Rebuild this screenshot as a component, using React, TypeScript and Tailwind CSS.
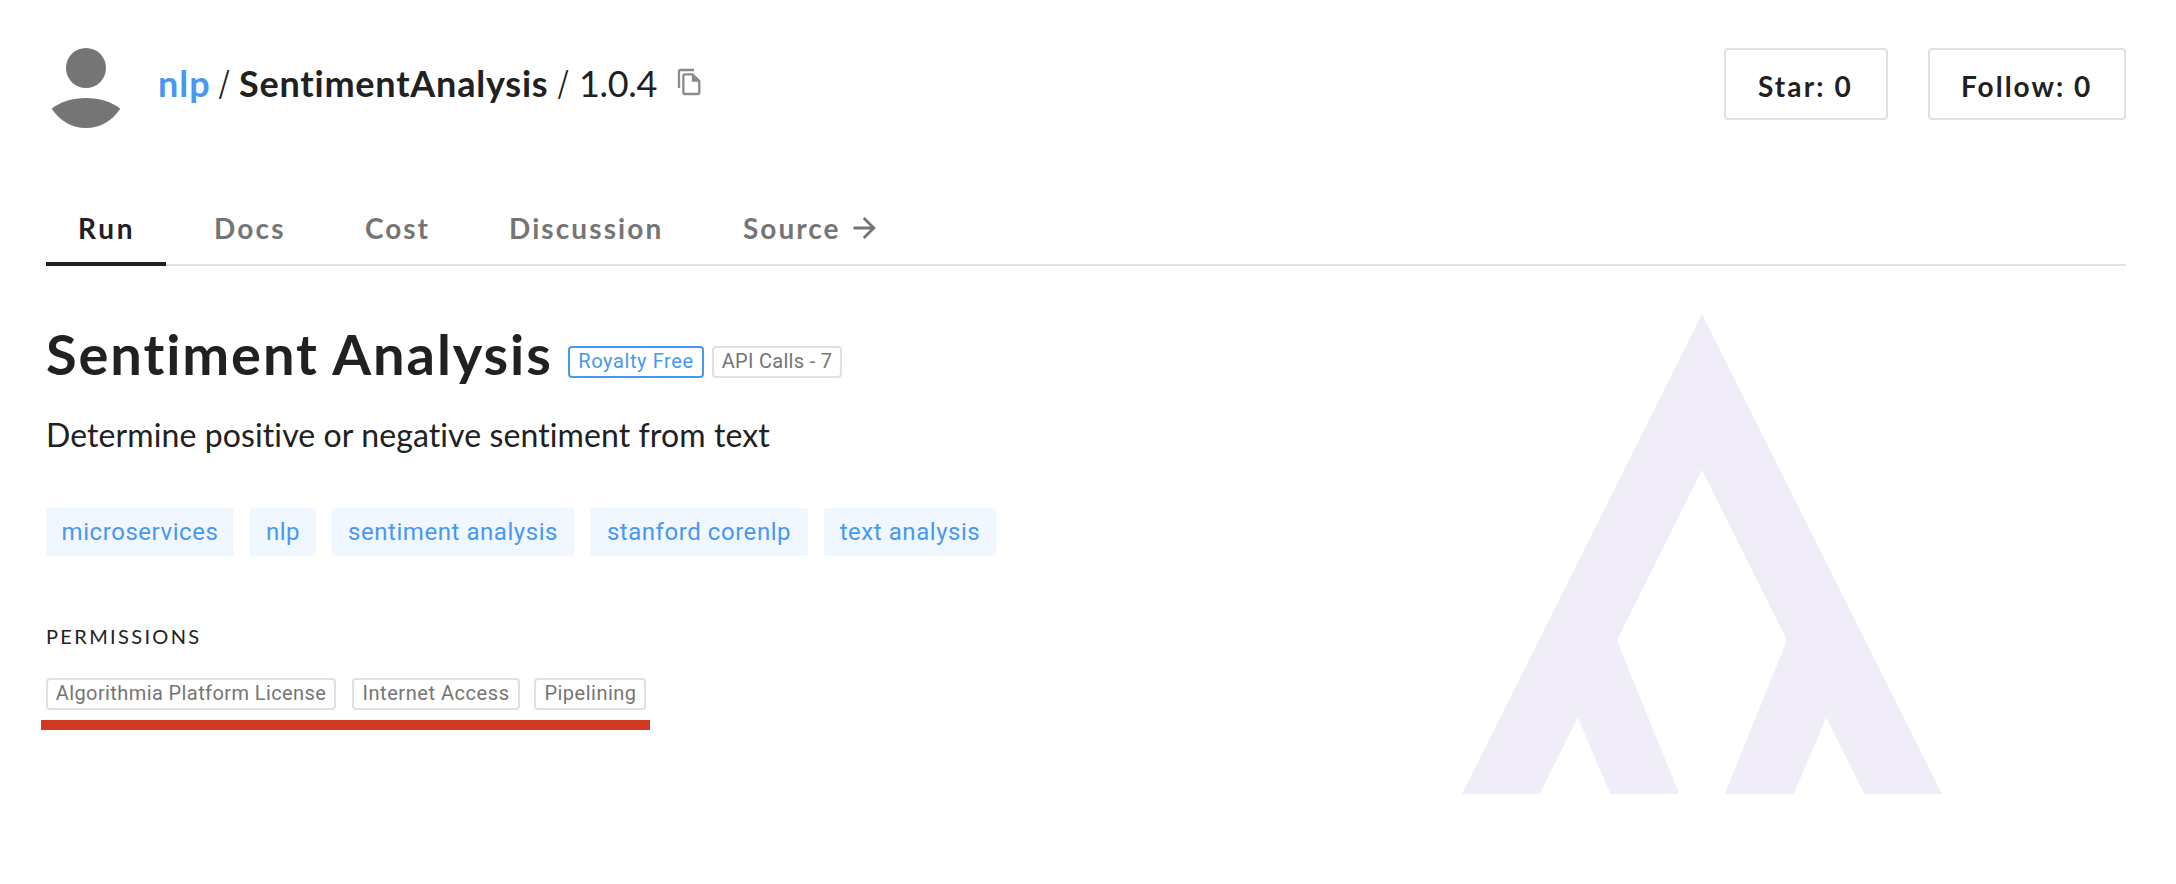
import React from "react";
import clsx from "clsx";

const LATO = "font-['Lato','Open_Sans',sans-serif] [font-variant-ligatures:none]";
const ROBOTO = "font-['Roboto','Inter',sans-serif]";

const tabs = [
  { label: "Run", width: "w-[120px]", tracking: "tracking-[2.8px]", active: true },
  { label: "Docs", width: "w-[135px]", tracking: "tracking-[2.2px]" },
  { label: "Cost", width: "w-[128px]", tracking: "tracking-[2px]" },
  { label: "Discussion", width: "w-[218px]", tracking: "tracking-[2.1px]" },
  { label: "Source", width: "w-[190px]", tracking: "tracking-[2px]", arrow: true },
];

const tags = [
  { label: "microservices", width: "w-[188px]" },
  { label: "nlp", width: "w-[66px]" },
  { label: "sentiment analysis", width: "w-[242px]" },
  { label: "stanford corenlp", width: "w-[218px]" },
  { label: "text analysis", width: "w-[172px]" },
];

function Avatar() {
  return (
    <svg width="80" height="80" viewBox="0 0 80 80" fill="#757575" className="shrink-0">
      <circle cx="40" cy="20" r="20" />
      <path d="M5.7 60.7C14 54 27 50 40 50S66 54 74.3 60.7C66 73 54 80 40 80S14 73 5.7 60.7Z" />
    </svg>
  );
}

function CopyIcon() {
  return (
    <svg width="24" height="28" viewBox="0 0 24 28" fill="none" stroke="#8a8a8a" strokeWidth="2.3">
      <path d="M17 2H3.5Q2 2 2 3.5V20" />
      <path d="M7.8 6.3H15.5L22.3 13V25Q22.3 26 21.3 26H7.5Q6.4 26 6.4 25V7.5Q6.4 6.3 7.8 6.3Z" />
      <path d="M14.8 5.5V13.8H23Z" fill="#8a8a8a" stroke="none" />
    </svg>
  );
}

function ArrowIcon() {
  return (
    <svg width="23" height="22" viewBox="0 0 23 22" fill="none" stroke="#757575" strokeWidth="2.8">
      <path d="M0.5 11H20.5M10.8 1L20.8 11L10.8 21" />
    </svg>
  );
}

function Badge({ children, className }: { children: React.ReactNode; className: string }) {
  return (
    <span
      className={clsx(
        "box-border flex h-8 justify-center whitespace-nowrap rounded border-2 text-[20px] leading-[27px]",
        ROBOTO,
        className,
      )}
    >
      {children}
    </span>
  );
}

export default function App() {
  return (
    <div className={clsx("h-[884px] w-[2176px] overflow-hidden bg-white pt-12 pr-[50px] pl-[46px] text-[#212121]", LATO)}>
      <header className="flex h-[150px] items-start">
        <Avatar />
        <div className="mt-[15px] ml-8 flex items-start whitespace-nowrap text-[36px] leading-[40px]">
          <a className="w-[60px] font-bold tracking-[1px] text-[#4898f0]">nlp</a>
          <span className="w-[21px] origin-left scale-x-75">/</span>
          <span className="w-[318px] font-bold tracking-[0.78px]">SentimentAnalysis</span>
          <span className="w-[22px] origin-left scale-x-75">/</span>
          <span className="w-[98px] tracking-[-0.3px]">1.0.4</span>
          <span className="pt-[5px]">
            <CopyIcon />
          </span>
        </div>
        <div className="ml-auto flex gap-10 text-[28px] leading-[36px] font-bold">
          <button className="h-[72px] w-[164px] rounded border-2 border-[#e0e0e0] pt-[3px] pl-[32px] text-left font-bold tracking-[2.1px] whitespace-nowrap">
            Star: 0
          </button>
          <button className="h-[72px] w-[198px] rounded border-2 border-[#e0e0e0] pt-[3px] pl-[31px] text-left font-bold tracking-[2px] whitespace-nowrap">
            Follow: 0
          </button>
        </div>
      </header>

      <nav className="flex h-[68px] gap-4 border-b-2 border-[#e0e0e0]">
        {tabs.map((t) => (
          <a
            key={t.label}
            className={clsx(
              "box-border flex h-[68px] pt-3 pl-8 text-[28px] leading-[36px] font-bold",
              t.width,
              t.tracking,
              t.active ? "border-b-4 border-[#212121]" : "text-[#757575]",
            )}
          >
            {t.label}
            {t.arrow && (
              <span className="pt-[7px] pl-[13px]">
                <ArrowIcon />
              </span>
            )}
          </a>
        ))}
      </nav>

      <main className="flex justify-between pr-[184px]">
        <section className="flex flex-col items-start pt-[54px]">
          <div className="flex h-16 items-start">
            <h1 className="w-[522px] pt-[2px] whitespace-nowrap text-[56px] leading-[64px] font-bold tracking-[1.9px]">Sentiment Analysis</h1>
            <div className="flex gap-2 pt-[26px]">
              <Badge className="w-[136px] border-[#4898f0] tracking-[0.6px] text-[#4898f0]">Royalty Free</Badge>
              <Badge className="w-[130px] border-[#e0e0e0] tracking-[0.3px] text-[#757575]">API Calls - 7</Badge>
            </div>
          </div>
          <p className="mt-[31px] whitespace-nowrap text-[32px] leading-[40px] tracking-[0.1px]">
            Determine positive or negative sentiment from text
          </p>
          <ul className={clsx("mt-[53px] flex gap-4 text-[24px] leading-[48px] tracking-[0.55px] text-[#4898f0]", ROBOTO)}>
            {tags.map((t) => (
              <li key={t.label} className={clsx("h-12 rounded bg-[#f0f7ff] text-center whitespace-nowrap", t.width)}>
                {t.label}
              </li>
            ))}
          </ul>
          <h2 className="mt-[68px] text-[20px] leading-[24px] tracking-[2.35px]">PERMISSIONS</h2>
          <div className="mt-[30px] flex text-[#757575]">
            <Badge className="w-[290px] border-[#e0e0e0] tracking-[0.4px]">Algorithmia Platform License</Badge>
            <Badge className="ml-4 w-[168px] border-[#e0e0e0] tracking-[0.55px]">Internet Access</Badge>
            <Badge className="ml-[14px] w-[112px] border-[#e0e0e0] pl-px tracking-[0.5px]">Pipelining</Badge>
          </div>
          <div className="mt-[10px] -ml-[5px] h-[10px] w-[609px] bg-[#d13821]" />
        </section>

        <svg width="480" height="480" viewBox="0 0 480 480" fill="#f0edf8" className="mt-12">
          <path
            fillRule="evenodd"
            d="M240 0L480 480H402.5L364.3 403.5L331.7 480H262.7L325 326.3L240 156L155 326.3L217.3 480H148.3L115.7 403.5L77.5 480H0Z"
          />
        </svg>
      </main>
    </div>
  );
}
